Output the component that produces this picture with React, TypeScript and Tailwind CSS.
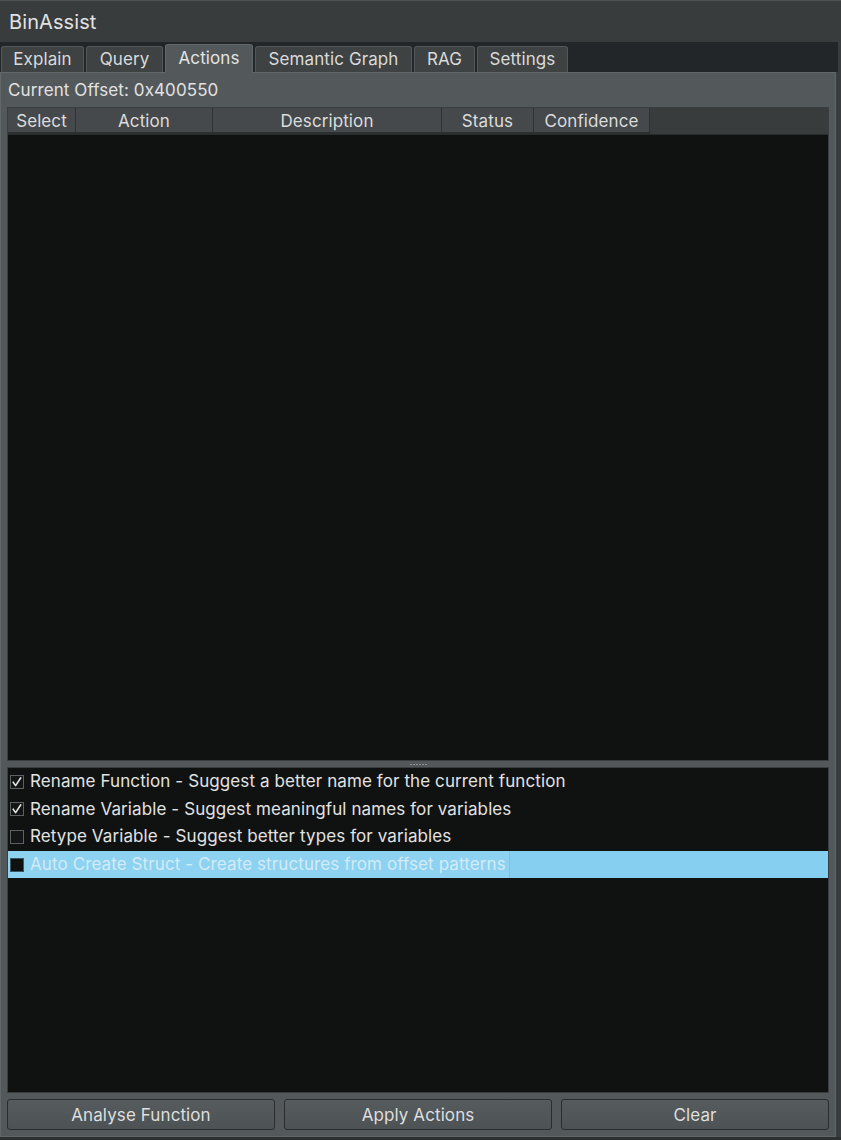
const tabs = [
  { label: 'Explain', w: 'w-[83px]' },
  { label: 'Query', w: 'w-[77px]' },
  { label: 'Actions', w: 'w-[88px]', active: true },
  { label: 'Semantic Graph', w: 'w-[157px]' },
  { label: 'RAG', w: 'w-[61px]' },
  { label: 'Settings', w: 'w-[91px]' },
];

const columns = [
  { label: 'Select', w: 'w-[68px]' },
  { label: 'Action', w: 'w-[137px]' },
  { label: 'Description', w: 'w-[229px]' },
  { label: 'Status', w: 'w-[92px]' },
  { label: 'Confidence', w: 'w-[116px]' },
];

const actions = [
  { text: 'Rename Function - Suggest a better name for the current function', checked: true },
  { text: 'Rename Variable - Suggest meaningful names for variables', checked: true },
  { text: 'Retype Variable - Suggest better types for variables', checked: false },
  { text: 'Auto Create Struct - Create structures from offset patterns', checked: false, selected: true },
];

function CheckBox({ checked, selected }: { checked: boolean; selected?: boolean }) {
  return (
    <div
      className={`w-[14px] h-[14px] shrink-0 border flex items-center justify-center ${
        selected ? 'bg-[#0f1111] border-[#3a5560]' : 'bg-[#141616] border-[#5c6163]'
      }`}
    >
      {checked && (
        <svg width="12" height="12" viewBox="0 0 12 12" fill="none">
          <path d="M2.2 6.2 L4.6 9.6 L9.8 1.8" stroke="#e2e2e2" strokeWidth="1.6" strokeLinecap="round" strokeLinejoin="round" />
        </svg>
      )}
    </div>
  );
}

export default function App() {
  return (
    <div
      className="w-[841px] h-[1140px] flex flex-col bg-[#383c3d] text-[#dedede] border-t border-[#4c5052] overflow-hidden tracking-[0.1px]"
      style={{ fontFamily: 'Inter, "Noto Sans", sans-serif' }}
    >
      {/* title */}
      <div className="h-[41px] shrink-0 flex items-center pl-[9px] pt-px text-[20px] text-[#e2e2e2]">BinAssist</div>

      {/* tab strip */}
      <div className="mr-[3px] h-[30px] shrink-0 bg-[#232628] flex items-end gap-[2px] pl-[1px]">
        {tabs.map((t) =>
          t.active ? (
            <div
              key={t.label}
              className={`${t.w} h-[29px] bg-[#53585a] border border-b-0 border-[#62676a] rounded-t-[3px] flex items-center justify-center text-[17px] text-[#e4e4e4] -mb-px relative z-10`}
            >
              {t.label}
            </div>
          ) : (
            <div
              key={t.label}
              className={`${t.w} h-[26px] bg-[#3e4243] border border-b-0 border-[#53585a] rounded-t-[3px] flex items-center justify-center text-[17px] text-[#dadada]`}
            >
              {t.label}
            </div>
          ),
        )}
      </div>

      {/* tab pane */}
      <div className="mr-[5px] flex-1 min-h-0 bg-[#53585a] border border-[#62676a] flex flex-col px-[6px] pb-[6px]">
        <div className="h-[34px] shrink-0 flex items-center pl-px pt-[2px] text-[17px] text-[#e2e2e2]">Current Offset: 0x400550</div>

        {/* results table */}
        <div className="h-[654px] shrink-0 flex flex-col border border-[#3a3e40] bg-[#101212]">
          <div className="h-[27px] shrink-0 flex bg-[#383c3d] border-b border-[#2a2d2e]">
            {columns.map((c) => (
              <div
                key={c.label}
                className={`${c.w} h-full bg-[#45494b] border-r border-[#2f3233] border-b-2 border-b-[#2c2f30] flex items-center justify-center pt-[3px] text-[17px] text-[#dcdcdc]`}
              >
                {c.label}
              </div>
            ))}
          </div>
          <div className="flex-1" />
        </div>

        {/* splitter */}
        <div className="h-[6px] shrink-0 flex items-center justify-center">
          <div className="flex gap-[1px]">
            {Array.from({ length: 6 }).map((_, i) => (
              <div key={i} className="w-[2px] h-[1px] bg-[#8a8f91]" />
            ))}
          </div>
        </div>

        {/* action type list */}
        <div className="flex-1 min-h-0 border border-[#3a3e40] bg-[#101212]">
          {actions.map((a) => (
            <div
              key={a.text}
              className={`h-[27.6px] flex items-center ${a.selected ? 'bg-[#87cff0]' : ''}`}
            >
              <div className={`h-full flex items-center gap-[6px] pl-[2px] pr-[3px] ${a.selected ? 'bg-[#8dd2f1] border-r border-[#7fc3e2]' : ''}`}>
                <CheckBox checked={a.checked} selected={a.selected} />
                <span className={`text-[17px] whitespace-nowrap ${a.selected ? 'text-[#d3ebf7]' : 'text-[#e2e2e2]'}`}>
                  {a.text}
                </span>
              </div>
            </div>
          ))}
        </div>

        {/* buttons */}
        <div className="h-[37px] shrink-0 grid grid-cols-3 gap-[9px] items-end">
          {['Analyse Function', 'Apply Actions', 'Clear'].map((b) => (
            <button
              key={b}
              className="h-[31px] rounded-[3px] border border-[#2a2d2e] bg-gradient-to-b from-[#565b5d] to-[#4d5254] pt-[2px] text-[17px] text-[#dedede] flex items-center justify-center"
            >
              {b}
            </button>
          ))}
        </div>
      </div>
      <div className="h-[3px] shrink-0 bg-[#2d3031]" />
    </div>
  );
}
